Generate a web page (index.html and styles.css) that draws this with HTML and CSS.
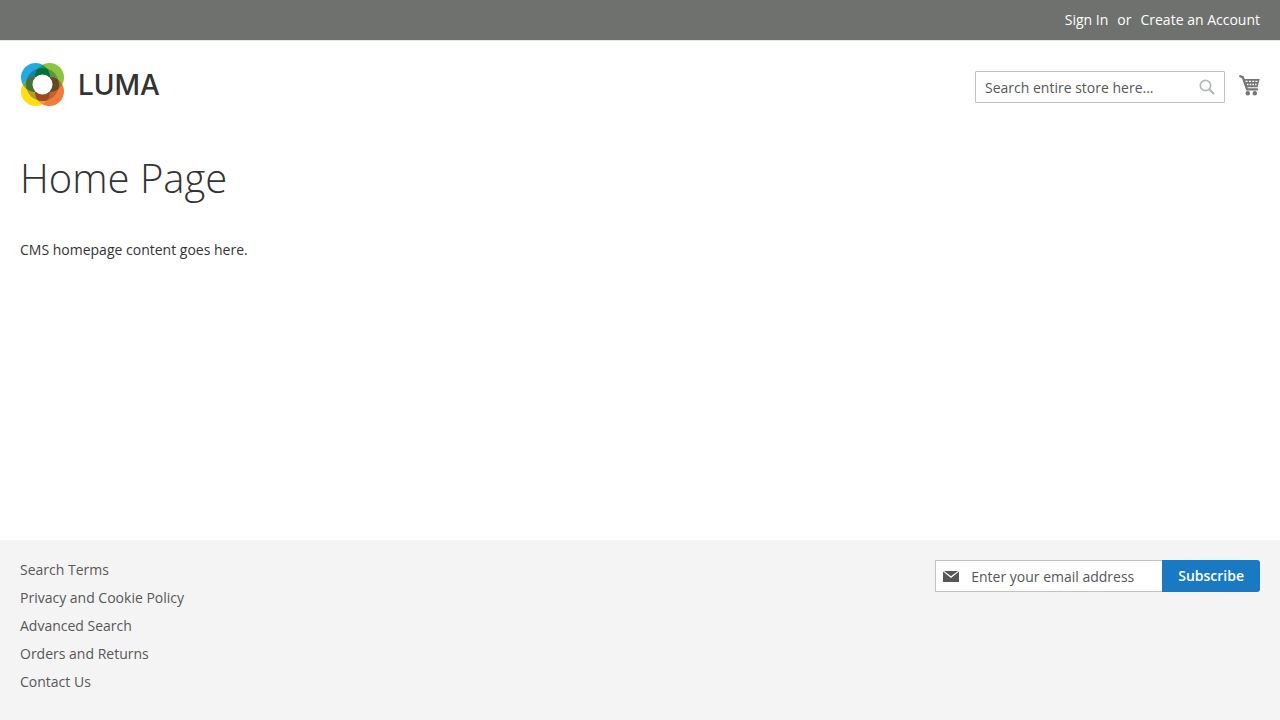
FILE: index.html
```html
<!DOCTYPE html>
<html lang="en">
<head>
    <meta charset="UTF-8">
    <meta name="viewport" content="width=device-width, initial-scale=1.0">
    <title>Home Page</title>
    <link rel="stylesheet" href="styles.css">
</head>
<body>
    <header class="page-header">
        <div class="panel">
            <ul class="header-links">
                <li><a href="#">Sign In</a></li>
                <li>or</li>
                <li><a href="#">Create an Account</a></li>
            </ul>
        </div>
        <div class="header-content">
            <a class="logo" href="#" aria-label="Luma">
                <svg class="logo-mark" viewBox="0 0 43 43" aria-hidden="true">
                    <clipPath id="ring"><circle cx="21.5" cy="21.5" r="16.5"/></clipPath>
                    <!-- outer circles -->
                    <circle cx="14.5" cy="14.5" r="14.5" fill="#26a9e0"/>
                    <circle cx="28.5" cy="14.5" r="14.5" fill="#8bc53f"/>
                    <circle cx="14.5" cy="28.5" r="14.5" fill="#ffde17"/>
                    <circle cx="28.5" cy="28.5" r="14.5" fill="#f37b3b"/>
                    <path d="M21.5 1.8A14.5 14.5 0 0 1 21.5 27.2A14.5 14.5 0 0 1 21.5 1.8" fill="#139a66"/>
                    <path d="M21.5 15.8A14.5 14.5 0 0 1 21.5 41.2A14.5 14.5 0 0 1 21.5 15.8" fill="#f2a01e"/>
                    <path d="M1.8 21.5A14.5 14.5 0 0 1 27.2 21.5A14.5 14.5 0 0 1 1.8 21.5" fill="#6fa544"/>
                    <path d="M15.8 21.5A14.5 14.5 0 0 1 41.2 21.5A14.5 14.5 0 0 1 15.8 21.5" fill="#a5762f"/>
                    <!-- darker inner ring -->
                    <g clip-path="url(#ring)">
                        <path d="M0 0h21.5v21.5H0z" fill="#1f7f9e"/>
                        <path d="M21.5 0H43v21.5H21.5z" fill="#5f9140"/>
                        <path d="M0 21.5h21.5V43H0z" fill="#b99b22"/>
                        <path d="M21.5 21.5H43V43H21.5z" fill="#c4622f"/>
                        <path d="M21.5 1.8A14.5 14.5 0 0 1 21.5 27.2A14.5 14.5 0 0 1 21.5 1.8" fill="#00703c"/>
                        <path d="M21.5 15.8A14.5 14.5 0 0 1 21.5 41.2A14.5 14.5 0 0 1 21.5 15.8" fill="#9c4a24"/>
                        <path d="M1.8 21.5A14.5 14.5 0 0 1 27.2 21.5A14.5 14.5 0 0 1 1.8 21.5" fill="#47703a"/>
                        <path d="M15.8 21.5A14.5 14.5 0 0 1 41.2 21.5A14.5 14.5 0 0 1 15.8 21.5" fill="#644824"/>
                    </g>
                    <circle cx="21.5" cy="21.5" r="10" fill="#fff"/>
                </svg>
                <span class="logo-text">LUMA</span>
            </a>
            <div class="header-tools">
                <form class="search">
                    <label class="visually-hidden" for="search">Search</label>
                    <input id="search" type="text" placeholder="Search entire store here...">
                    <button type="submit" aria-label="Search">
                        <svg viewBox="0 0 16 16" aria-hidden="true">
                            <circle cx="6.5" cy="6.5" r="5.2" fill="none" stroke="currentColor" stroke-width="1.7"/>
                            <path d="M10 10l5 5" stroke="currentColor" stroke-width="2.2"/>
                        </svg>
                    </button>
                </form>
                <a class="cart" href="#" aria-label="My Cart">
                    <svg viewBox="0 0 21 21" aria-hidden="true">
                        <path d="M1.2 1.2L3.8 2.2L8 14.4H18" fill="none" stroke="currentColor" stroke-width="2.2" stroke-linecap="round"/>
                        <path d="M4 4H20.6L18.6 12.2H7z" fill="currentColor"/>
                        <path d="M6.6 6.3h2M10 6.3h2M13.2 6.3h2M16.4 6.3h2M8 9.5h1.5M10.7 9.5h1.6M13.4 9.5h1.6M16.1 9.5h1.4" stroke="#fff" stroke-width="1.3"/>
                        <circle cx="8.8" cy="18.3" r="2.2" fill="currentColor"/>
                        <circle cx="15.8" cy="18.3" r="2.2" fill="currentColor"/>
                    </svg>
                </a>
            </div>
        </div>
    </header>

    <main class="page-main">
        <h1>Home Page</h1>
        <p>CMS homepage content goes here.</p>
    </main>

    <footer class="page-footer">
        <ul class="footer-links">
            <li><a href="#">Search Terms</a></li>
            <li><a href="#">Privacy and Cookie Policy</a></li>
            <li><a href="#">Advanced Search</a></li>
            <li><a href="#">Orders and Returns</a></li>
            <li><a href="#">Contact Us</a></li>
        </ul>
        <form class="newsletter">
            <label class="visually-hidden" for="newsletter">Email address</label>
            <div class="newsletter-field">
                <svg viewBox="0 0 16 12" aria-hidden="true">
                    <path d="M0 1.6V12h16V1.6L8 8z" fill="currentColor"/>
                    <path d="M1 1h14L8 6.2z" fill="currentColor"/>
                </svg>
                <input id="newsletter" type="email" placeholder="Enter your email address">
            </div>
            <button type="submit">Subscribe</button>
        </form>
    </footer>
</body>
</html>
```
FILE: styles.css
```css
* {
    box-sizing: border-box;
}
body {
    display: flex;
    flex-direction: column;
    min-height: 100vh;
    margin: 0;
    background: #fff;
    color: #333;
    font-family: 'Open Sans', 'Helvetica Neue', Helvetica, Arial, sans-serif;
    font-size: 14px;
    line-height: 20px;
}
a {
    color: inherit;
    text-decoration: none;
}
a:hover {
    text-decoration: underline;
}
ul {
    list-style: none;
    margin: 0;
    padding: 0;
}
input,
button {
    font: inherit;
}
input::placeholder {
    color: #575757;
    opacity: 1;
}
.visually-hidden {
    position: absolute;
    width: 1px;
    height: 1px;
    overflow: hidden;
    clip-path: inset(50%);
}

/* Header */
.panel {
    background: #6e716e;
    border-bottom: 1px solid #e8e8e8;
    color: #fff;
}
.header-links {
    display: flex;
    justify-content: flex-end;
    gap: 9px;
    padding: 10px 20px;
}
.header-content {
    display: flex;
    justify-content: space-between;
    padding: 22px 20px 0;
}
.logo {
    display: flex;
    align-items: center;
    gap: 14px;
    padding-left: 1px;
}
.logo:hover {
    text-decoration: none;
}
.logo-mark {
    width: 43px;
    height: 43px;
}
.logo-text {
    font-family: Inter, sans-serif;
    font-size: 28px;
    font-weight: 500;
    line-height: 40px;
}
.header-tools {
    display: flex;
    align-items: center;
    gap: 14px;
    padding-top: 4px;
}
.search {
    display: flex;
    width: 250px;
    height: 32px;
    border: 1px solid #c2c2c2;
    border-radius: 1px;
    background: #fff;
}
.search input {
    flex: 1;
    min-width: 0;
    padding: 2px 9px 0;
    border: 0;
    background: none;
}
.search button {
    padding: 0 9px;
    border: 0;
    background: none;
    color: #b5b8b8;
    line-height: 0;
    cursor: pointer;
}
.search svg {
    width: 16px;
    height: 16px;
}
.cart {
    padding-bottom: 2px;
    color: #757575;
    line-height: 0;
}
.cart svg {
    width: 21px;
    height: 21px;
}

/* Content */
.page-main {
    flex: 1;
    padding: 50px 20px 20px;
}
.page-main h1 {
    margin: 0 0 40px;
    font-size: 40px;
    font-weight: 300;
    line-height: 44px;
}
.page-main p {
    margin: 0;
}

/* Footer */
.page-footer {
    display: flex;
    justify-content: space-between;
    align-items: flex-start;
    padding: 20px 20px 28px;
    background: #f4f4f4;
    color: #575757;
}
.footer-links {
    display: flex;
    flex-direction: column;
    gap: 8px;
}
.newsletter {
    display: flex;
    height: 32px;
}
.newsletter-field {
    display: flex;
    align-items: center;
    gap: 12px;
    width: 227px;
    padding-left: 7px;
    border: 1px solid #c2c2c2;
    border-right: 0;
    border-radius: 1px 0 0 1px;
    background: #fff;
}
.newsletter-field svg {
    flex: none;
    width: 16px;
    height: 12px;
}
.newsletter input {
    flex: 1;
    align-self: stretch;
    min-width: 0;
    padding: 2px 0 0;
    border: 0;
    background: none;
}
.newsletter button {
    padding: 0 16px;
    border: 0;
    border-radius: 0 3px 3px 0;
    background: #1979c3;
    color: #fff;
    font-weight: 600;
    cursor: pointer;
}
```
